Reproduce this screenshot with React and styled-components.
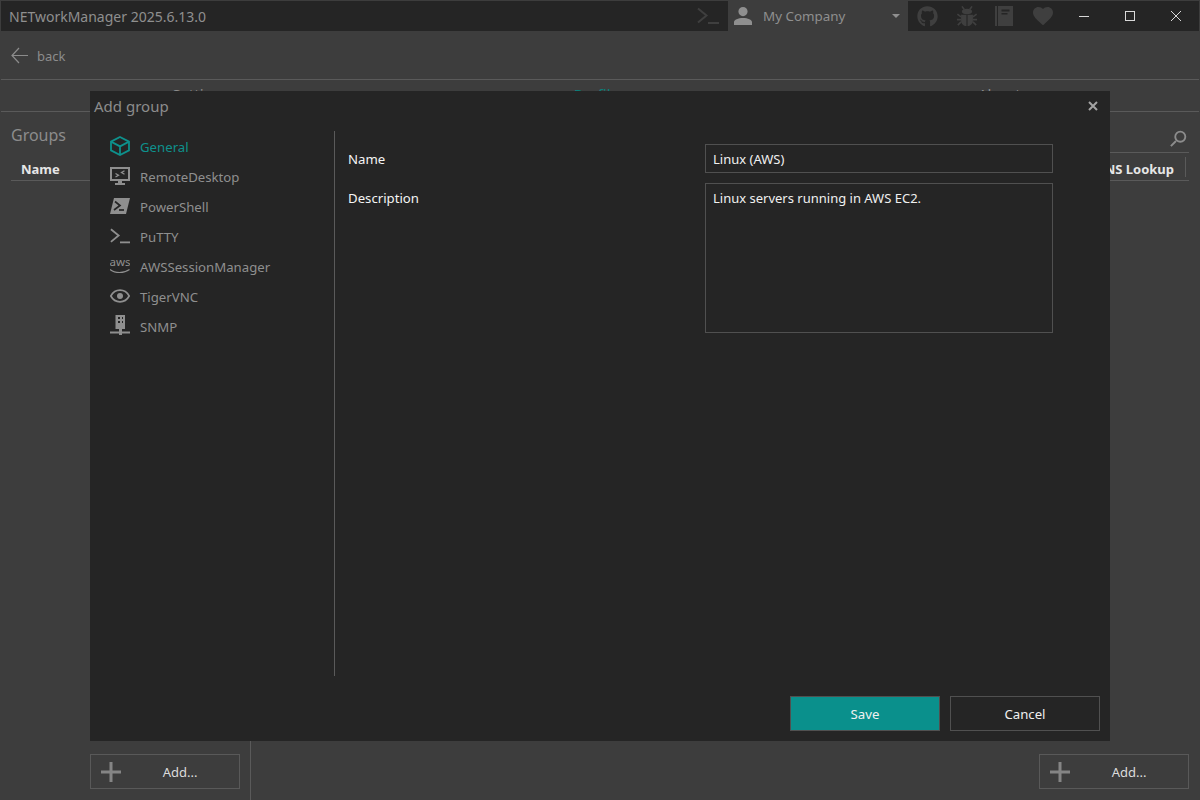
import React from 'react'
import styled, { createGlobalStyle } from 'styled-components'
import { FaGithub } from 'react-icons/fa'

const GlobalStyle = createGlobalStyle`
    html, body {
        margin: 0;
        padding: 0;
        background: #3d3d3d;
        font-family: "Noto Sans", "Open Sans", sans-serif;
    }
`

const Page = styled.div`
    position: relative;
    width: 1200px;
    height: 800px;
    box-sizing: border-box;
    border: 1px solid #3d3d3d;
    border-bottom: none;
    background: #3d3d3d;
    display: flex;
    flex-direction: column;
    overflow: hidden;
    color: #a3a3a3;
`

const TitleBar = styled.div`
    height: 30px;
    background: #252525;
    display: flex;
    align-items: center;
    flex: none;
`

const AppTitle = styled.div`
    flex: 1;
    padding-left: 8px;
    font-size: 14px;
    color: #8f8f8f;
`

const TitleIconCell = styled.div`
    width: 48px;
    height: 30px;
    box-sizing: border-box;
    padding-left: 8px;
    display: flex;
    align-items: center;
    justify-content: center;
    color: #3f3f3f;
`

const ProfileSelect = styled.div`
    width: 180px;
    height: 30px;
    background: #3d3d3d;
    display: flex;
    align-items: center;
    padding: 0 8px 0 3px;
    box-sizing: border-box;
    color: #8f8f8f;
    font-size: 13.4px;
`

const ProfileName = styled.span`
    flex: 1;
    margin-left: 8px;
`

const Caret = styled.span`
    width: 0;
    height: 0;
    border-left: 4px solid transparent;
    border-right: 4px solid transparent;
    border-top: 4px solid #8f8f8f;
`

const DarkIcons = styled.div`
    display: flex;
    align-items: center;
    gap: 17.5px;
    padding-left: 9px;
    width: 153px;
    box-sizing: border-box;
    color: #3f3f3f;
`

const WindowButtons = styled.div`
    display: flex;
    height: 30px;
`

const WindowButton = styled.div`
    width: 46px;
    display: flex;
    align-items: center;
    justify-content: center;
    color: #d8d8d8;
`

const BackRow = styled.div`
    height: 49px;
    box-sizing: border-box;
    flex: none;
    display: flex;
    align-items: center;
    padding-left: 10px;
    gap: 9px;
    font-size: 13px;
    color: #8c8c8c;
    border-bottom: 1px solid #5a5a5a;
`

const BackLabel = styled.span`
    padding-top: 2px;
`

const Tabs = styled.div`
    height: 32px;
    box-sizing: border-box;
    flex: none;
    display: grid;
    grid-template-columns: repeat(3, 1fr);
    border-bottom: 1px solid #5a5a5a;
`

const Tab = styled.div`
    text-align: center;
    font-size: 15px;
    padding-top: 4px;
    color: ${p => (p.$active ? '#0b7d78' : '#8c8c8c')};
`

const Body = styled.div`
    flex: 1;
    display: flex;
    min-height: 0;
`

const GroupsPanel = styled.div`
    width: 250px;
    flex: none;
    box-sizing: border-box;
    border-right: 1px solid #5a5a5a;
    padding: 10px 10px 11px 10px;
    display: flex;
    flex-direction: column;
`

const PanelTitle = styled.div`
    font-size: 16px;
    line-height: 26px;
    color: #8c8c8c;
`

const GroupsHeader = styled.div`
    margin-top: 9px;
    height: 24px;
    box-sizing: border-box;
    border-bottom: 1px solid #5a5a5a;
    padding-left: 10px;
    display: flex;
    align-items: center;
    font-size: 13px;
    font-weight: 700;
    color: #e6e6e6;
`

const ProfilesPanel = styled.div`
    flex: 1;
    padding: 9px 10px 11px 0;
    display: flex;
    flex-direction: column;
`

const SearchRow = styled.div`
    height: 32px;
    display: flex;
    justify-content: flex-end;
    align-items: center;
    padding-top: 5px;
    box-sizing: border-box;
    border-bottom: 1px solid #5a5a5a;
    color: #8c8c8c;
`

const ColumnHeader = styled.div`
    height: 28px;
    box-sizing: border-box;
    border-bottom: 1px solid #5a5a5a;
    display: flex;
    justify-content: flex-end;
    align-items: center;
    font-size: 13px;
    font-weight: 700;
    color: #e6e6e6;
`

const ColumnLabel = styled.span`
    padding: 2px 11px 0 0;
    margin-right: 3px;
    height: 20px;
    box-sizing: border-box;
    line-height: 20px;
    border-right: 1px solid #5a5a5a;
`

const Spacer = styled.div`
    flex: 1;
`

const AddRow = styled.div`
    display: flex;
    justify-content: flex-end;
`

const AddButton = styled.div`
    width: 150px;
    height: 35px;
    box-sizing: border-box;
    border: 1px solid #595959;
    display: flex;
    align-items: center;
    padding-left: 10px;
    font-size: 13px;
    color: #dcdcdc;
`

const AddLabel = styled.span`
    flex: 1;
    text-align: center;
`

const Dialog = styled.div`
    position: absolute;
    left: 89px;
    top: 90px;
    width: 1020px;
    height: 650px;
    background: #252525;
    display: flex;
    flex-direction: column;
`

const DialogHeader = styled.div`
    height: 40px;
    flex: none;
    display: flex;
    align-items: center;
    justify-content: space-between;
    padding: 0 12px 10px 4px;
    box-sizing: border-box;
    font-size: 15px;
    color: #8c8c8c;
`

const CloseButton = styled.div`
    display: flex;
    color: #a3a3a3;
`

const DialogMain = styled.div`
    flex: 1;
    display: flex;
    min-height: 0;
`

const Sidebar = styled.div`
    width: 245px;
    flex: none;
    margin-bottom: 15px;
    box-sizing: border-box;
    border-right: 1px solid #5a5a5a;
    padding-left: 20px;
`

const NavItem = styled.div`
    height: 30px;
    display: flex;
    align-items: center;
    gap: 10px;
    font-size: 13.2px;
    color: ${p => (p.$active ? '#0e918c' : '#8f8f8f')};
`

const NavIcon = styled.span`
    width: 20px;
    height: 20px;
    flex: none;
    display: flex;
    align-items: center;
    justify-content: center;
`

const NavLabel = styled.span`
    padding-top: 2px;
`

const Form = styled.div`
    flex: 1;
    padding: 13px 57px 0 13px;
    display: grid;
    grid-template-columns: 357px 348px;
    grid-template-rows: 29px 150px;
    row-gap: 10px;
    align-content: start;
    font-size: 13px;
    color: #f0f0f0;
`

const FieldLabel = styled.div`
    line-height: 31px;
    font-size: 13.2px;
    color: #f4f4f4;
`

const FieldBox = styled.div`
    box-sizing: border-box;
    border: 1px solid #505050;
    padding: 0 7px;
    line-height: 29px;
    color: #f0f0f0;
`

const DialogFooter = styled.div`
    height: 50px;
    flex: none;
    display: flex;
    justify-content: flex-end;
    gap: 10px;
    padding: 5px 10px 0 0;
    box-sizing: border-box;
`

const DialogButton = styled.div`
    width: 150px;
    height: 35px;
    box-sizing: border-box;
    border: 1px solid #505050;
    background: ${p => (p.$primary ? '#0a908c' : 'transparent')};
    color: #f0f0f0;
    font-size: 13.2px;
    display: flex;
    align-items: center;
    justify-content: center;
`

const AwsSvg = styled.svg`
    margin-top: -3px;
    flex: none;
`

const TerminalIcon = ({ size = 22, color = 'currentColor', width = 2 }) => (
    <svg width={size} height={size} viewBox="0 0 22 22" fill="none" stroke={color} strokeWidth={width}>
        <path d="M1 3.5 L9.5 10.5 L1 17.5" />
        <path d="M11 18 H22" />
    </svg>
)

const BookIcon = () => (
    <svg width="18" height="22" viewBox="0 0 18 22" fill="currentColor">
        <path fillRule="evenodd" d="M0 1H2V21H0ZM3 1H18V21H3ZM6.5 4.5V6.5H14.5V4.5ZM6.5 8V9.5H12.5V8Z" />
    </svg>
)

const BugIcon = () => (
    <svg width="22" height="22" viewBox="0 0 24 24" fill="currentColor" stroke="none">
        <path d="M9 5L6.5 1.5M15 5L17.5 1.5" stroke="currentColor" strokeWidth="1.8" fill="none" />
        <ellipse cx="12" cy="7" rx="5.5" ry="3" />
        <path d="M11.4 10.5H5.5V17.5C5.5 20.5 8.5 23 11.4 23ZM12.6 10.5H18.5V17.5C18.5 20.5 15.5 23 12.6 23Z" />
        <path d="M5.5 13L1.5 10M5.5 16H1M5.5 18.5L2 22M18.5 13L22.5 10M18.5 16H23M18.5 18.5L22 22" stroke="currentColor" strokeWidth="1.8" fill="none" />
    </svg>
)

const HeartIcon = () => (
    <svg width="24" height="24" viewBox="0 0 24 24" fill="currentColor">
        <path d="M12,21.35L10.55,20.03C5.4,15.36 2,12.27 2,8.5C2,5.41 4.42,3 7.5,3C9.24,3 10.91,3.81 12,5.08C13.09,3.81 14.76,3 16.5,3C19.58,3 22,5.41 22,8.5C22,12.27 18.6,15.36 13.45,20.03L12,21.35Z" />
    </svg>
)

const PersonIcon = () => (
    <svg width="24" height="24" viewBox="0 0 24 24" fill="#8f8f8f">
        <path d="M12,3A4.6,4.6 0 0,1 16.6,7.6A4.6,4.6 0 0,1 12,12.2A4.6,4.6 0 0,1 7.4,7.6A4.6,4.6 0 0,1 12,3M12,14C16.9,14 21,15.7 21,18V21H3V18C3,15.7 7.1,14 12,14Z" />
    </svg>
)

const SearchIcon = () => (
    <svg width="22" height="22" viewBox="0 0 24 24" fill="currentColor" style={{ transform: 'scaleX(-1)' }}>
        <path d="M9.5,3A6.5,6.5 0 0,1 16,9.5C16,11.11 15.41,12.59 14.44,13.73L14.71,14H15.5L20.5,19L19,20.5L14,15.5V14.71L13.73,14.44C12.59,15.41 11.11,16 9.5,16A6.5,6.5 0 0,1 3,9.5A6.5,6.5 0 0,1 9.5,3M9.5,5C7,5 5,7 5,9.5C5,12 7,14 9.5,14C12,14 14,12 14,9.5C14,7 12,5 9.5,5Z" />
    </svg>
)

const PlusIcon = () => (
    <svg width="20" height="20" viewBox="0 0 20 20" fill="#858585">
        <path d="M8.5 0H11.5V8.5H20V11.5H11.5V20H8.5V11.5H0V8.5H8.5Z" />
    </svg>
)

const CubeIcon = () => (
    <svg width="20" height="20" viewBox="0 0 20 20" fill="none" stroke="currentColor" strokeWidth="1.8">
        <path d="M10 1L19 5.6V14.4L10 19L1 14.4V5.6Z" />
        <path d="M1 5.6L10 10.4L19 5.6M10 10.4V19" />
    </svg>
)

const MonitorIcon = () => (
    <svg width="20" height="20" viewBox="0 0 20 20" fill="#8f8f8f">
        <path fillRule="evenodd" d="M0 1H20V15H12V17H15V19H5V17H8V15H0ZM2 3V13H18V3Z" />
        <path d="M5.5 7.5L8.5 9.2L5.5 11M14.5 4.8L11.5 6.5L14.5 8.3" fill="none" stroke="#8f8f8f" strokeWidth="1.3" />
    </svg>
)

const PowerShellIcon = () => (
    <svg width="20" height="20" viewBox="0 0 20 20">
        <path d="M4 2H20L16 18H0Z" fill="#8f8f8f" />
        <path d="M5 5.5L10 9.5L4 14" fill="none" stroke="#252525" strokeWidth="1.7" />
        <path d="M9 14H14" fill="none" stroke="#252525" strokeWidth="1.7" />
    </svg>
)

const AwsIcon = () => (
    <AwsSvg width="20" height="23" viewBox="0 -3 20 23" fill="none">
        <text x="10" y="10" textAnchor="middle" fontSize="11.5" fill="#8f8f8f" fontFamily="Noto Sans, sans-serif">aws</text>
        <path d="M0 13.5C5 17.5 14 17.5 19.5 13.5" stroke="#8f8f8f" strokeWidth="1.2" />
    </AwsSvg>
)

const EyeIcon = () => (
    <svg width="20" height="20" viewBox="0 0 20 20">
        <path d="M.8 10C3 6 6.2 4.2 10 4.2S17 6 19.2 10C17 14 13.8 15.8 10 15.8S3 14 .8 10Z" fill="none" stroke="#8f8f8f" strokeWidth="1.7" />
        <circle cx="10" cy="10" r="3" fill="#8f8f8f" />
    </svg>
)

const SnmpIcon = () => (
    <svg width="20" height="20" viewBox="0 0 20 20" fill="#8f8f8f" overflow="visible">
        <path fillRule="evenodd" d="M5.5 -1H15V13H12V15.5H20V17.5H12V19H9V17.5H0V15.5H9V13H5.5ZM8 1V3H10V1ZM12 1V3H13V1ZM8 5V7H10V5ZM12 5V7H13V5Z" />
    </svg>
)

const navItems = [
    { label: 'General', icon: <CubeIcon />, active: true },
    { label: 'RemoteDesktop', icon: <MonitorIcon /> },
    { label: 'PowerShell', icon: <PowerShellIcon /> },
    { label: 'PuTTY', icon: <TerminalIcon size={20} color="#8f8f8f" /> },
    { label: 'AWSSessionManager', icon: <AwsIcon /> },
    { label: 'TigerVNC', icon: <EyeIcon /> },
    { label: 'SNMP', icon: <SnmpIcon /> },
]

const App = () => {
    return (
        <Page>
            <GlobalStyle />
            <TitleBar>
                <AppTitle>NETworkManager 2025.6.13.0</AppTitle>
                <TitleIconCell><TerminalIcon /></TitleIconCell>
                <ProfileSelect>
                    <PersonIcon />
                    <ProfileName>My Company</ProfileName>
                    <Caret />
                </ProfileSelect>
                <DarkIcons>
                    <FaGithub size={21} />
                    <BugIcon />
                    <BookIcon />
                    <HeartIcon />
                </DarkIcons>
                <WindowButtons>
                    <WindowButton>
                        <svg width="10" height="10" viewBox="0 0 10 10" stroke="currentColor"><path d="M0 5.5H10" /></svg>
                    </WindowButton>
                    <WindowButton>
                        <svg width="10" height="10" viewBox="0 0 10 10" fill="none" stroke="currentColor"><rect x=".5" y=".5" width="9" height="9" /></svg>
                    </WindowButton>
                    <WindowButton>
                        <svg width="10" height="10" viewBox="0 0 10 10" stroke="currentColor"><path d="M0 0L10 10M10 0L0 10" /></svg>
                    </WindowButton>
                </WindowButtons>
            </TitleBar>
            <BackRow>
                <svg width="17" height="17" viewBox="0 0 17 17" fill="none" stroke="#8c8c8c" strokeWidth="1.2">
                    <path d="M8 1L1 8.5L8 16M1 8.5H17" />
                </svg>
                <BackLabel>back</BackLabel>
            </BackRow>
            <Tabs>
                <Tab>Settings</Tab>
                <Tab $active>Profiles</Tab>
                <Tab>About</Tab>
            </Tabs>
            <Body>
                <GroupsPanel>
                    <PanelTitle>Groups</PanelTitle>
                    <GroupsHeader>Name</GroupsHeader>
                    <Spacer />
                    <AddRow>
                        <AddButton><PlusIcon /><AddLabel>Add...</AddLabel></AddButton>
                    </AddRow>
                </GroupsPanel>
                <ProfilesPanel>
                    <SearchRow><SearchIcon /></SearchRow>
                    <ColumnHeader><ColumnLabel>DNS Lookup</ColumnLabel></ColumnHeader>
                    <Spacer />
                    <AddRow>
                        <AddButton><PlusIcon /><AddLabel>Add...</AddLabel></AddButton>
                    </AddRow>
                </ProfilesPanel>
            </Body>
            <Dialog>
                <DialogHeader>
                    Add group
                    <CloseButton>
                        <svg width="10" height="10" viewBox="0 0 10 10" stroke="currentColor" strokeWidth="2"><path d="M1 1L9 9M9 1L1 9" /></svg>
                    </CloseButton>
                </DialogHeader>
                <DialogMain>
                    <Sidebar>
                        {navItems.map(item => (
                            <NavItem key={item.label} $active={item.active}>
                                <NavIcon>{item.icon}</NavIcon>
                                <NavLabel>{item.label}</NavLabel>
                            </NavItem>
                        ))}
                    </Sidebar>
                    <Form>
                        <FieldLabel>Name</FieldLabel>
                        <FieldBox>Linux (AWS)</FieldBox>
                        <FieldLabel>Description</FieldLabel>
                        <FieldBox>Linux servers running in AWS EC2.</FieldBox>
                    </Form>
                </DialogMain>
                <DialogFooter>
                    <DialogButton $primary>Save</DialogButton>
                    <DialogButton>Cancel</DialogButton>
                </DialogFooter>
            </Dialog>
        </Page>
    )
}

export default App
